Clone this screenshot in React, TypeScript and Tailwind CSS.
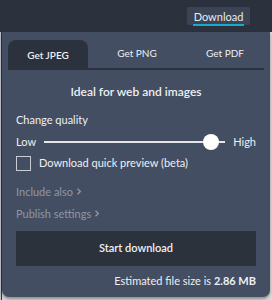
import React, { useState } from 'react';

const tabs = [
  { label: 'Get JPEG', w: 'w-[80px]' },
  { label: 'Get PNG', w: 'w-[98px]' },
  { label: 'Get PDF', w: 'flex-1' },
];

export default function App() {
  const [active, setActive] = useState(0);
  const [quality, setQuality] = useState(92);
  const [preview, setPreview] = useState(false);

  return (
    <div
      className="w-[272px] h-[300px] bg-[#d9d9d9] overflow-hidden text-[#eef0f3]"
      style={{ fontFamily: 'Lato, "Open Sans", sans-serif' }}
    >
      {/* Top bar */}
      <div className="h-[32px] bg-[#2c323d] flex items-center justify-end pr-[22px]">
        <button className="h-[18px] w-[63px] bg-[#3b4455] text-[11px] leading-none text-[#e8ebef] rounded-[2px] flex flex-col items-center justify-center">
          <span className="relative">
            Download
            <span className="absolute left-[-1px] right-[-1px] bottom-[-4px] h-[2px] bg-[#19a9cf]" />
          </span>
        </button>
      </div>

      {/* Panel */}
      <div className="flex h-[268px]">
        <div className="w-[2px] bg-[#2c323d] border-l border-[#bfc3c9]" />
        <div className="w-[268px] h-[265px] bg-[#434e62] rounded-b-[7px] shadow-[0_2px_3px_rgba(0,0,0,0.35)] px-[6px] pt-[8px]">
          {/* Tabs */}
          <div className="flex border-b-2 border-[#2c323d]">
            {tabs.map((t, i) => (
              <button
                key={t.label}
                onClick={() => setActive(i)}
                className={`${t.w} h-[28px] text-[10px] rounded-t-[8px] flex items-center justify-center ${
                  i === active ? 'bg-[#2c323d] font-semibold pt-[3px]' : 'pb-[2px]'
                }`}
              >
                {t.label}
              </button>
            ))}
          </div>

          <div className="px-[8px]">
            <div className="text-center text-[12px] font-semibold mt-[14px] leading-[16px]">
              Ideal for web and images
            </div>

            <div className="text-[11px] mt-[13px] leading-[14px]">Change quality</div>

            {/* Slider */}
            <div className="flex items-center mt-[7px] h-[16px] text-[11px]">
              <span className="w-[28px]">Low</span>
              <div className="relative flex-1 h-[16px] flex items-center">
                <div className="w-full h-[1.5px] bg-[#e4e6ea]" />
                <div
                  className="absolute w-[16px] h-[16px] rounded-full bg-white -translate-x-1/2"
                  style={{ left: `${quality}%` }}
                  onClick={() => setQuality(quality)}
                />
              </div>
              <span className="ml-[8px]">High</span>
            </div>

            {/* Checkbox */}
            <label className="flex items-center mt-[5px] text-[11px] cursor-pointer">
              <span
                onClick={() => setPreview(!preview)}
                className="w-[15px] h-[15px] border border-[#c9ced6] mr-[8px] flex items-center justify-center"
              >
                {preview ? '✓' : ''}
              </span>
              Download quick preview (beta)
            </label>

            <div className="flex items-center text-[11px] text-[#8e97a6] mt-[13px] leading-[14px]">
              Include also
              <svg className="ml-[3px] w-[6px] h-[7px]" viewBox="0 0 6 7" fill="none" stroke="currentColor" strokeWidth={1.4}>
                <path d="M1.5 0.8L4.3 3.5L1.5 6.2" />
              </svg>
            </div>
            <div className="flex items-center text-[11px] text-[#8e97a6] mt-[8px] leading-[14px]">
              Publish settings
              <svg className="ml-[3px] w-[6px] h-[7px]" viewBox="0 0 6 7" fill="none" stroke="currentColor" strokeWidth={1.4}>
                <path d="M1.5 0.8L4.3 3.5L1.5 6.2" />
              </svg>
            </div>

            <button className="w-full h-[35px] mt-[10px] bg-[#2c323c] text-[11px] font-semibold">
              Start download
            </button>

            <div className="text-right text-[11px] mt-[7px]">
              Estimated file size is <span className="font-bold">2.86 MB</span>
            </div>
          </div>
        </div>
      </div>
    </div>
  );
}
